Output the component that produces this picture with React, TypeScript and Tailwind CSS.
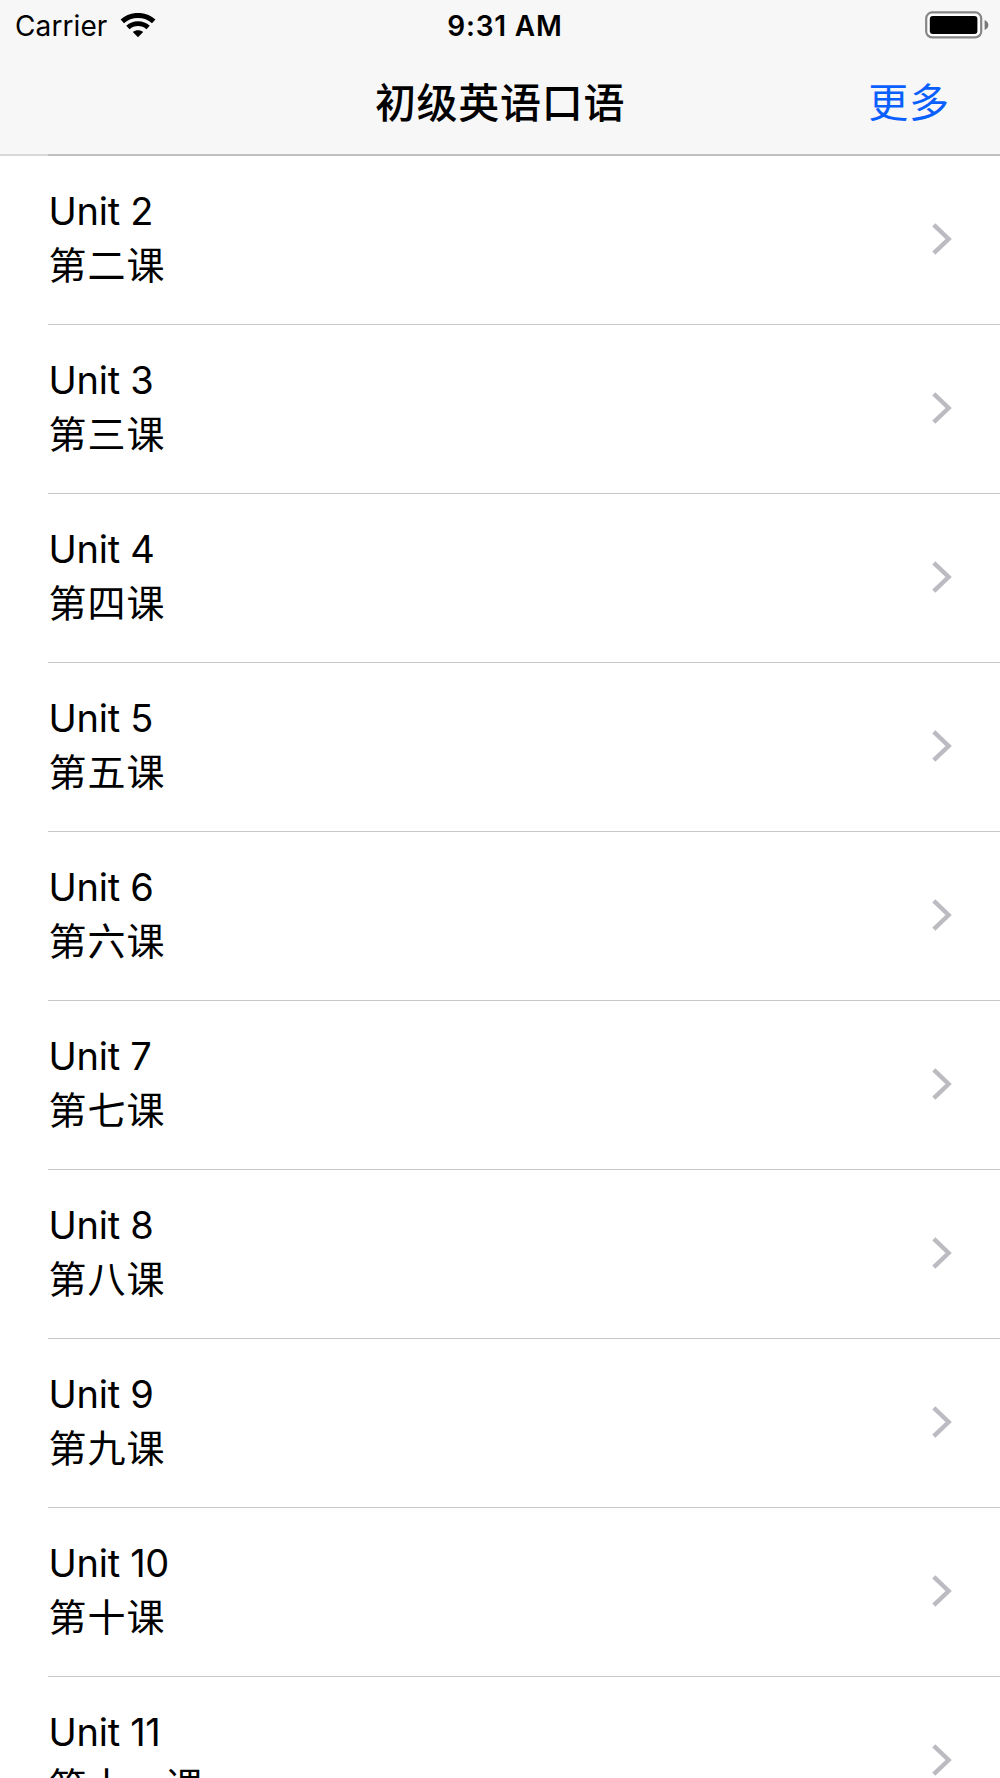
const units = [
  ["Unit 2", "第二课"],
  ["Unit 3", "第三课"],
  ["Unit 4", "第四课"],
  ["Unit 5", "第五课"],
  ["Unit 6", "第六课"],
  ["Unit 7", "第七课"],
  ["Unit 8", "第八课"],
  ["Unit 9", "第九课"],
  ["Unit 10", "第十课"],
  ["Unit 11", "第十一课"],
];

function Wifi() {
  return (
    <svg className="ml-[13px] h-[26px] w-[36px]" viewBox="0 0 36 26" fill="none">
      <path d="M2.3 8.4C11 .4 25 .4 33.7 8.4" stroke="#000" strokeWidth="5" />
      <path d="M7.9 14.6C13.5 9.3 22.5 9.3 28.1 14.6" stroke="#000" strokeWidth="4.8" />
      <path d="M18 24.2L12.8 19C15.7 16.5 20.3 16.5 23.2 19Z" fill="#000" />
    </svg>
  );
}

function Battery() {
  return (
    <svg className="mb-[2px] h-[28px] w-[64px]" viewBox="0 0 64 28" fill="none">
      <rect x="1.2" y="1.4" width="55" height="25" rx="6" fill="#fff" stroke="#858585" strokeWidth="2.2" />
      <rect x="4.8" y="4.9" width="47.6" height="18" rx="3" fill="#000" />
      <path d="M59.6 9C64.6 11 64.6 17 59.6 19Z" fill="#777" />
    </svg>
  );
}

function Chevron() {
  return (
    <svg className="h-[32px] w-[20px]" viewBox="0 0 20 32" fill="none">
      <path d="M1.8 1.9L16.6 16L1.8 30.1" stroke="#bbbbc1" strokeWidth="4.4" />
    </svg>
  );
}

export default function App() {
  return (
    <div className="flex h-[1778px] w-[1000px] flex-col overflow-hidden bg-white font-['Inter','Noto_Sans_CJK_SC',sans-serif] text-black">
      <header className="h-[156px] shrink-0 bg-[#f7f7f7]">
        <div className="grid h-[50px] grid-cols-3 items-center">
          <div className="flex items-center pl-[15px]">
            <span className="pt-px text-[28px] leading-[50px] tracking-[0.1px]">Carrier</span>
            <Wifi />
          </div>
          <div className="pl-[10px] pt-px text-center text-[28px] font-semibold leading-[49px] tracking-[0.8px]">9:31 AM</div>
          <div className="flex justify-end pr-[11px]">
            <Battery />
          </div>
        </div>
        <div className="grid h-[104px] grid-cols-[1fr_auto_1fr] items-center">
          <span />
          <h1 className="pt-[2px] text-[41px] font-medium leading-[102px] tracking-[0.7px]">初级英语口语</h1>
          <button className="justify-self-end pr-[50px] pt-[2px] text-[40px] font-normal leading-[102px] tracking-[0.9px] text-[#0a60ff]">更多</button>
        </div>
        <div className="flex h-[2px]">
          <div className="w-[48px] bg-[#d8d8d8]" />
          <div className="flex-1 bg-[#c0c0c0]" />
        </div>
      </header>
      <ul>
        {units.map(([title, lesson]) => (
          <li key={title} className="ml-[48px] flex h-[169.05px] items-center justify-between border-b border-[#c8c7cc] pb-[2px] pl-[0.6px] pr-[48px]">
            <div className="whitespace-nowrap pb-px">
              <div className="text-[38px] leading-[53px] tracking-[-0.3px]">
                <span className="relative -top-px">{title}</span>
              </div>
              <div className="text-[38px] font-normal leading-[53px] tracking-[0.9px]">{lesson}</div>
            </div>
            <Chevron />
          </li>
        ))}
      </ul>
    </div>
  );
}
